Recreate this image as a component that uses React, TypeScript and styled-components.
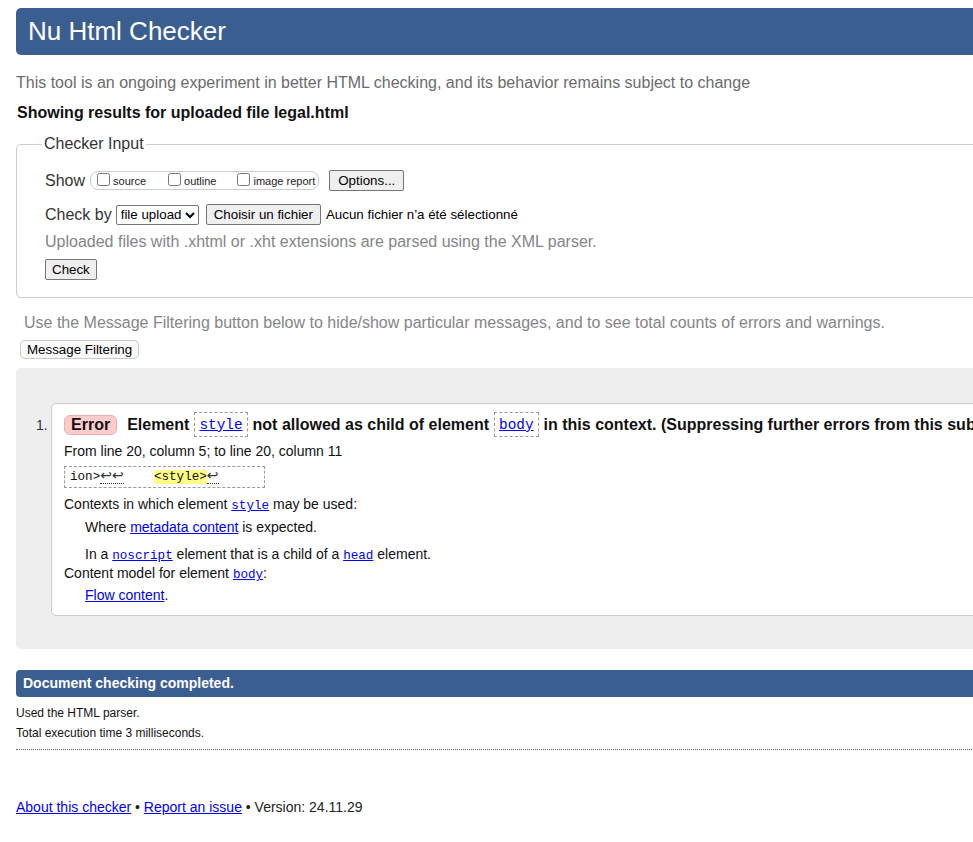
import React from "react";
import styled, { createGlobalStyle } from "styled-components";

const Global = createGlobalStyle`
  html, body { margin: 0; padding: 0; overflow: hidden; background: #fff; }
  body { font-family: "Liberation Sans", Arial, sans-serif; color: #000; }
`;

const Page = styled.div`
  width: 1400px;
  padding: 8px 16px 40px 16px;
  box-sizing: border-box;
`;

const Header = styled.h1`
  margin: 0;
  height: 47px;
  line-height: 47px;
  padding: 0 12px;
  background: #3b5e91;
  color: #fff;
  font-size: 26px;
  font-weight: normal;
  border-radius: 5px;
`;

const Intro = styled.p<{ $indent?: number; $light?: boolean; $mt?: number }>`
  margin: ${(p) => p.$mt ?? 19}px 0 0 ${(p) => p.$indent ?? 0}px;
  font-size: 16px;
  line-height: 18px;
  color: ${(p) => (p.$light ? "#858585" : "#6b6b6b")};
`;

const Showing = styled.p`
  margin: 12px 0 0 1px;
  font-size: 16px;
  line-height: 18px;
  font-weight: bold;
  color: #111;
`;

const Fieldset = styled.fieldset`
  margin: 13px 0 0 0;
  border: 1px solid #ccc;
  border-radius: 5px;
  padding: 17px 0 17px 24px;
`;

const Legend = styled.legend`
  font-size: 16px;
  line-height: 18px;
  color: #333;
  padding: 0 2px;
  margin-left: 1px;
`;

const Row = styled.div<{ $mt?: number }>`
  display: flex;
  align-items: center;
  margin: ${(p) => p.$mt ?? 0}px 0 0 4px;
  font-size: 16px;
  color: #333;
`;

const Label = styled.span`
  font-size: 16px;
  line-height: 18px;
  color: #333;
  margin-right: 5px;
`;

const ToggleGroup = styled.span`
  display: inline-flex;
  align-items: center;
  height: 17px;
  border: 1px solid #ccc;
  border-radius: 8px;
  padding: 0 3px 0 1px;
  margin-right: 10px;
`;

const Toggle = styled.label<{ $gap?: number }>`
  display: inline-flex;
  align-items: center;
  font-size: 11px;
  color: #222;
  margin-right: ${(p) => p.$gap ?? 0}px;
  input {
    width: 13px;
    height: 13px;
    margin: 0 3px 2px 5px;
  }
`;

const Button = styled.button<{ $round?: boolean; $pad?: number }>`
  font-family: "Liberation Sans", Arial, sans-serif;
  font-size: 13.333px;
  line-height: 15px;
  color: #000;
  background: ${(p) => (p.$round ? "#fafafa" : "#efefef")};
  border: 1px solid ${(p) => (p.$round ? "#c8c8c8" : "#767676")};
  border-radius: ${(p) => (p.$round ? "5px" : "2px")};
  padding: 1px ${(p) => p.$pad ?? 6}px;
  height: ${(p) => (p.$round ? "19px" : "21px")};
  margin: 0;
`;

const Select = styled.select`
  font-family: "Liberation Sans", Arial, sans-serif;
  font-size: 13.333px;
  height: 20px;
  margin: 0 7px 0 -1px;
  color: #000;
  border: 1px solid #767676;
  border-radius: 2px;
  background: #fff;
`;

const FileText = styled.span`
  font-size: 13.333px;
  margin-left: 5px;
  color: #000;
`;

const Results = styled.div`
  margin-top: 9px;
  background: #eee;
  border-radius: 5px;
  padding: 35px 0 33px 20px;
`;

const Item = styled.div`
  display: flex;
  align-items: flex-start;
`;

const Num = styled.span`
  width: 15px;
  font-size: 14px;
  color: #333;
  padding-top: 14px;
`;

const Card = styled.div`
  background: #fff;
  border: 1px solid #ccc;
  border-radius: 5px;
  padding: 8px 12px 12px 12px;
  flex: 1;
`;

const Headline = styled.p`
  margin: 0;
  display: flex;
  align-items: center;
  white-space: nowrap;
  font-size: 16px;
  font-weight: bold;
  color: #111;
`;

const Badge = styled.strong`
  display: inline-block;
  background: #fcc;
  border: 1px solid #e8b0b0;
  border-radius: 6px;
  padding: 0 6px;
  height: 18px;
  line-height: 18px;
  margin-right: 10px;
  font-size: 16px;
`;

const CodeBox = styled.span`
  display: inline-flex;
  align-items: center;
  border: 1px dashed #999;
  height: 23px;
  padding: 0 4px;
  margin: 0 5px;
`;

const CodeLink = styled.a`
  font-family: "Liberation Mono", "DejaVu Sans Mono", monospace;
  font-size: 0.9em;
  font-weight: normal;
  color: #00e;
  text-decoration: underline;
`;

const Small = styled.p<{ $mt?: number; $indent?: number }>`
  margin: ${(p) => p.$mt ?? 0}px 0 0 ${(p) => p.$indent ?? 0}px;
  font-size: 14px;
  line-height: 16px;
  color: #111;
`;

const Link = styled.a`
  color: #00e;
  text-decoration: underline;
`;

const Extract = styled.div`
  margin-top: 7px;
  width: 194px;
  height: 20px;
  line-height: 20px;
  border: 1px dashed #999;
  padding-left: 5px;
  box-sizing: content-box;
  font-family: "Liberation Mono", "DejaVu Sans Mono", monospace;
  font-size: 12.6px;
  white-space: pre;
  overflow: hidden;
  color: #111;
`;

const Lf = styled.span`
  border-bottom: 1px dotted #333;
  font-family: "DejaVu Sans", sans-serif;
  font-size: 14px;
  line-height: 14px;
  color: #333;
`;

const Mark = styled.mark`
  background: #ff8;
  color: #111;
`;

const Bar = styled.div`
  margin-top: 21px;
  height: 27px;
  line-height: 27px;
  background: #3b5e91;
  color: #fff;
  font-size: 14px;
  font-weight: bold;
  padding: 0 7px;
  border-radius: 4px;
`;

const Note = styled.p<{ $mt?: number }>`
  margin: ${(p) => p.$mt ?? 0}px 0 0 0;
  font-size: 12px;
  line-height: 15px;
  color: #111;
`;

const Rule = styled.hr`
  margin: 8px 0 0 0;
  border: none;
  border-top: 1px dotted #666;
`;

const Footer = styled.p`
  margin: 49px 0 0 0;
  font-size: 14px;
  line-height: 16px;
  color: #222;
`;

export default function App() {
  return (
    <Page>
      <Global />
      <Header>Nu Html Checker</Header>
      <Intro>
        This tool is an ongoing experiment in better HTML checking, and its behavior remains subject to change
      </Intro>
      <Showing>Showing results for uploaded file legal.html</Showing>
      <Fieldset>
        <Legend>Checker Input</Legend>
        <Row>
          <Label>Show</Label>
          <ToggleGroup>
            <Toggle $gap={17}>
              <input type="checkbox" />source
            </Toggle>
            <Toggle $gap={16}>
              <input type="checkbox" />outline
            </Toggle>
            <Toggle>
              <input type="checkbox" />image report
            </Toggle>
          </ToggleGroup>
          <Button $pad={8}>Options...</Button>
        </Row>
        <Row $mt={13}>
          <Label>Check by</Label>
          <Select defaultValue="file">
            <option value="file">file upload</option>
          </Select>
          <Button $pad={7}>Choisir un fichier</Button>
          <FileText>Aucun fichier n’a été sélectionné</FileText>
        </Row>
        <Intro $mt={8} $indent={4} $light>
          Uploaded files with .xhtml or .xht extensions are parsed using the XML parser.
        </Intro>
        <Row $mt={8}>
          <Button>Check</Button>
        </Row>
      </Fieldset>
      <Intro $mt={16} $indent={8} $light>
        Use the Message Filtering button below to hide/show particular messages, and to see total counts of errors and warnings.
      </Intro>
      <Row $mt={8}>
        <Button $round>Message Filtering</Button>
      </Row>
      <Results>
        <Item>
          <Num>1.</Num>
          <Card>
            <Headline>
              <Badge>Error</Badge>
              Element
              <CodeBox>
                <CodeLink>style</CodeLink>
              </CodeBox>
              not allowed as child of element
              <CodeBox>
                <CodeLink>body</CodeLink>
              </CodeBox>
              in this context. (Suppressing further errors from this subtree.)
            </Headline>
            <Small $mt={6}>From line 20, column 5; to line 20, column 11</Small>
            <Extract>
              {"ion>"}
              <Lf>↩↩</Lf>
              {"    "}
              <Mark>{"<style>"}</Mark>
              <Lf>↩</Lf>
            </Extract>
            <Small $mt={8}>
              Contexts in which element <CodeLink>style</CodeLink> may be used:
            </Small>
            <Small $mt={5} $indent={21}>
              Where <Link>metadata content</Link> is expected.
            </Small>
            <Small $mt={11} $indent={21}>
              In a <CodeLink>noscript</CodeLink> element that is a child of a <CodeLink>head</CodeLink> element.
            </Small>
            <Small $mt={1}>
              Content model for element <CodeLink>body</CodeLink>:
            </Small>
            <Small $mt={4} $indent={21}>
              <Link>Flow content</Link>.
            </Small>
          </Card>
        </Item>
      </Results>
      <Bar>Document checking completed.</Bar>
      <Note $mt={9}>Used the HTML parser.</Note>
      <Note $mt={5}>Total execution time 3 milliseconds.</Note>
      <Rule />
      <Footer>
        <Link>About this checker</Link> • <Link>Report an issue</Link> • Version: 24.11.29
      </Footer>
    </Page>
  );
}
